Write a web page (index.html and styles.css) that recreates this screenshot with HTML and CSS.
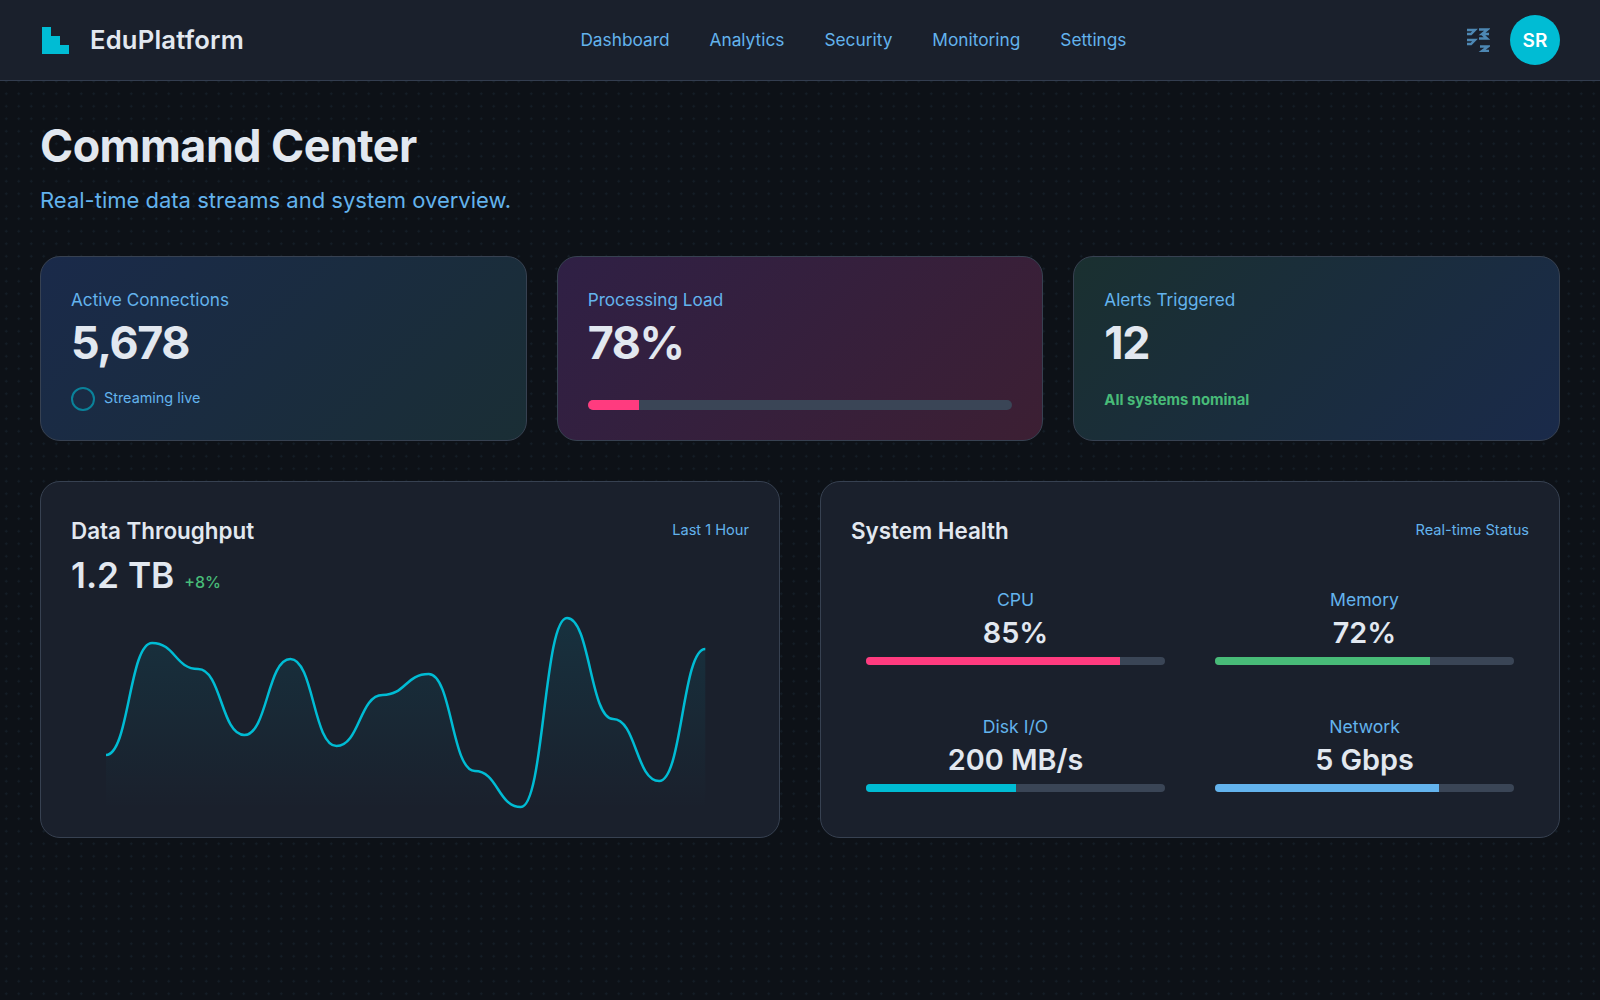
FILE: index.html
```html
<!DOCTYPE html>
<html lang="en">
<head>
    <meta charset="UTF-8">
    <meta name="viewport" content="width=device-width, initial-scale=1.0">
    <title>Command Center - EduPlatform</title>
    <link rel="stylesheet" href="styles.css">
</head>
<body>
    <header class="topbar">
        <div class="brand">
            <svg class="brand-icon" viewBox="0 0 27 27"><path d="M0 0H9V9H18V18H27V27H0Z" fill="#00bcd4"/></svg>
            <span class="brand-name">EduPlatform</span>
        </div>
        <nav class="nav">
            <a href="#">Dashboard</a>
            <a href="#">Analytics</a>
            <a href="#">Security</a>
            <a href="#">Monitoring</a>
            <a href="#">Settings</a>
        </nav>
        <div class="user">
            <svg class="user-icon" viewBox="0 0 24 24" fill="none" stroke="#63b3ed" stroke-width="2.4">
                <path d="M1 2H9L5 6H1M1 12H9L5 16H1M13 1.5H21.5L16 6H23M16 6L21 10.5H13M14 18.5H22L16 23H23"/>
            </svg>
            <div class="avatar">SR</div>
        </div>
    </header>

    <main class="content">
        <h1>Command Center</h1>
        <p class="subtitle">Real-time data streams and system overview.</p>

        <section class="kpis">
            <div class="kpi kpi-blue">
                <div class="kpi-label">Active Connections</div>
                <div class="kpi-value">5,678</div>
                <div class="kpi-foot">
                    <span class="ring"></span>
                    <span class="live">Streaming live</span>
                </div>
            </div>
            <div class="kpi kpi-purple">
                <div class="kpi-label">Processing Load</div>
                <div class="kpi-value">78%</div>
                <div class="kpi-foot">
                    <div class="bar bar-thick"><div class="fill pink" style="width:12%"></div></div>
                </div>
            </div>
            <div class="kpi kpi-green">
                <div class="kpi-label">Alerts Triggered</div>
                <div class="kpi-value">12</div>
                <div class="kpi-foot">
                    <span class="nominal">All systems nominal</span>
                </div>
            </div>
        </section>

        <section class="panels">
            <div class="panel">
                <div class="panel-head">
                    <h2>Data Throughput</h2>
                    <span class="panel-note">Last 1 Hour</span>
                </div>
                <div class="throughput">
                    <span class="throughput-value">1.2 TB</span>
                    <span class="throughput-change">+8%</span>
                </div>
                <svg class="chart" viewBox="0 0 678 200">
                    <defs>
                        <linearGradient id="area" x1="0" y1="0" x2="0" y2="1">
                            <stop offset="0" stop-color="#00bcd4" stop-opacity="0.11"/>
                            <stop offset="1" stop-color="#00bcd4" stop-opacity="0"/>
                        </linearGradient>
                    </defs>
                    <path id="chart-area" fill="url(#area)"/>
                    <path id="chart-line" fill="none" stroke="#00bcd4" stroke-width="2.5"/>
                </svg>
            </div>

            <div class="panel">
                <div class="panel-head">
                    <h2>System Health</h2>
                    <span class="panel-note">Real-time Status</span>
                </div>
                <div class="gauges">
                    <div class="gauge">
                        <div class="gauge-label">CPU</div>
                        <div class="gauge-value">85%</div>
                        <div class="bar"><div class="fill pink" style="width:85%"></div></div>
                    </div>
                    <div class="gauge">
                        <div class="gauge-label">Memory</div>
                        <div class="gauge-value">72%</div>
                        <div class="bar"><div class="fill green" style="width:72%"></div></div>
                    </div>
                    <div class="gauge">
                        <div class="gauge-label">Disk I/O</div>
                        <div class="gauge-value">200 MB/s</div>
                        <div class="bar"><div class="fill cyan" style="width:50%"></div></div>
                    </div>
                    <div class="gauge">
                        <div class="gauge-label">Network</div>
                        <div class="gauge-value">5 Gbps</div>
                        <div class="bar"><div class="fill blue" style="width:75%"></div></div>
                    </div>
                </div>
            </div>
        </section>
    </main>

    <script>
        // Throughput samples, y inside the chart box
        const points = [146, 34, 60, 126, 50, 137, 86, 65, 162, 198, 9, 110, 172, 40];
        const startX = 35;
        const stepX = 46.1;

        function drawChart() {
            let d = `M${startX} ${points[0]}`;
            points.forEach((y, i) => {
                if (i === 0) return;
                const x = startX + i * stepX;
                const prevX = x - stepX;
                d += ` C${prevX + stepX * 0.5} ${points[i - 1]} ${x - stepX * 0.5} ${y} ${x} ${y}`;
            });
            const endX = startX + (points.length - 1) * stepX;
            document.getElementById('chart-line').setAttribute('d', d);
            document.getElementById('chart-area').setAttribute('d', `${d} L${endX} 200 L${startX} 200 Z`);
        }

        drawChart();
    </script>
</body>
</html>
```

FILE: styles.css
```css
* {
    box-sizing: border-box;
}
body {
    margin: 0;
    min-height: 1000px;
    font-family: Inter, "Noto Sans", sans-serif;
    color: #e2e8f0;
    background-color: #0d1117;
    background-image: radial-gradient(circle, #151e27 1px, transparent 1.2px);
    background-size: 12.5px 12.5px;
}
.topbar {
    height: 81px;
    padding: 0 40px;
    display: flex;
    justify-content: space-between;
    align-items: center;
    background-color: #1a202c;
    border-bottom: 1px solid #333d4f;
}
.brand {
    display: flex;
    align-items: center;
    gap: 21px;
    font-size: 25.6px;
    font-weight: 600;
    letter-spacing: 0.2px;
}
.brand-name {
    padding-bottom: 2px;
}
.brand-icon {
    width: 27px;
    height: 27px;
    margin-left: 2px;
}
.nav {
    display: flex;
    gap: 40px;
    padding-bottom: 2px;
    margin-right: 3px;
}
.nav a {
    color: #63b3ed;
    font-size: 17.3px;
    text-decoration: none;
}
.user {
    display: flex;
    justify-content: flex-end;
    align-items: center;
    gap: 20px;
}
.user-icon {
    width: 24px;
    height: 24px;
    opacity: 0.7;
}
.avatar {
    width: 50px;
    height: 50px;
    border-radius: 50%;
    display: flex;
    align-items: center;
    justify-content: center;
    background-color: #00bcd4;
    color: white;
    font-size: 19px;
    font-weight: 600;
}
.content {
    padding: 40px;
}
h1 {
    margin: 0;
    font-size: 44.8px;
    line-height: 50px;
    font-weight: 700;
    letter-spacing: -0.5px;
}
.subtitle {
    margin: 14px 0 0;
    font-size: 22px;
    line-height: 30px;
    color: #63b3ed;
}
.kpis {
    margin-top: 41px;
    display: grid;
    grid-template-columns: repeat(3, 1fr);
    gap: 30px;
}
.kpi {
    height: 185px;
    padding: 31px 30px 30px;
    border: 1px solid #374151;
    border-radius: 20px;
}
.kpi-blue {
    background: linear-gradient(135deg, #1a2a4a, #1a2e35);
}
.kpi-purple {
    background: linear-gradient(135deg, #2f2045, #3c1f33);
}
.kpi-green {
    background: linear-gradient(135deg, #1a3030, #1a2a4a);
}
.kpi-label {
    font-size: 17.2px;
    line-height: 24px;
    color: #63b3ed;
}
.kpi-value {
    margin-top: 3px;
    font-size: 44.8px;
    line-height: 56px;
    font-weight: 700;
    letter-spacing: -1.4px;
}
.kpi-foot {
    height: 24px;
    margin-top: 16px;
    display: flex;
    align-items: center;
    gap: 9px;
}
.ring {
    width: 24px;
    height: 24px;
    border: 2px solid rgba(0, 188, 212, 0.6);
    border-radius: 50%;
}
.live {
    font-size: 14.4px;
    color: #63b3ed;
    padding-bottom: 3px;
}
.nominal {
    font-size: 14.8px;
    font-weight: 700;
    color: #48bb78;
    padding-top: 2px;
}
.bar {
    height: 8px;
    border-radius: 4px;
    background-color: #3a4556;
    overflow: hidden;
}
.bar-thick {
    width: 100%;
    height: 10px;
    border-radius: 5px;
    margin-top: 12px;
}
.fill {
    height: 100%;
}
.pink {
    background-color: #ff3b7f;
}
.green {
    background-color: #48bb78;
}
.cyan {
    background-color: #00bcd4;
}
.blue {
    background-color: #63b3ed;
}
.panels {
    margin-top: 40px;
    display: grid;
    grid-template-columns: 1fr 1fr;
    gap: 40px;
}
.panel {
    height: 357px;
    padding: 30px;
    background-color: #1a202c;
    border: 1px solid #374151;
    border-radius: 20px;
}
.panel-head {
    display: flex;
    justify-content: space-between;
    align-items: center;
}
h2 {
    margin: 0;
    font-size: 22.4px;
    line-height: 38px;
    font-weight: 600;
}
.panel-note {
    font-size: 14.6px;
    color: #63b3ed;
    margin-bottom: 3px;
}
.throughput {
    margin-top: 2px;
    display: flex;
    align-items: baseline;
    gap: 10px;
}
.throughput-value {
    font-size: 35.2px;
    line-height: 46px;
    font-weight: 600;
}
.throughput-change {
    font-size: 16px;
    font-weight: 500;
    color: #48bb78;
}
.chart {
    display: block;
    width: 678px;
    height: 200px;
    margin-top: 11px;
}
.gauges {
    margin-top: 24px;
    display: grid;
    grid-template-columns: 1fr 1fr;
    gap: 21px 20px;
}
.gauge {
    padding: 15px;
    text-align: center;
}
.gauge-label {
    font-size: 17.6px;
    line-height: 22px;
    color: #63b3ed;
}
.gauge-value {
    font-size: 28.8px;
    line-height: 36px;
    font-weight: 600;
    margin: 4px 0 6px;
}
```
